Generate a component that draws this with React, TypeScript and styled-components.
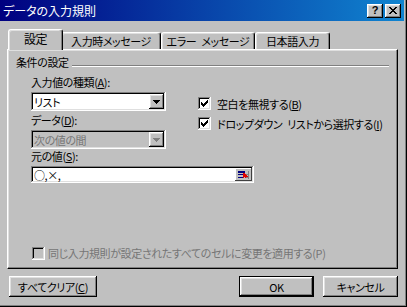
import React from "react";
import styled, { createGlobalStyle, css } from "styled-components";

const GlobalStyle = createGlobalStyle`
  html, body { margin: 0; padding: 0; background: #c0c0c0; }
  * { box-sizing: border-box; }
`;

const raised = css`
  box-shadow: inset -1px -1px #000, inset 1px 1px #fff, inset -2px -2px #808080, inset 2px 2px #dfdfdf;
`;
const sunken = css`
  box-shadow: inset -1px -1px #fff, inset 1px 1px #808080, inset -2px -2px #dfdfdf, inset 2px 2px #000;
`;

const Window = styled.div`
  width: 407px;
  height: 307px;
  background: #c0c0c0;
  display: flex;
  flex-direction: column;
  padding: 0 3px 3px 0;
  box-shadow: inset -1px -1px #000, inset -2px -2px #808080;
  font-family: "Noto Sans CJK JP", "Liberation Sans", sans-serif;
  font-size: 11px;
  letter-spacing: -0.4px;
  word-spacing: 3px;
  line-height: 14px;
  font-feature-settings: "palt";
  color: #000;
  overflow: hidden;
`;

const TitleBar = styled.div`
  height: 21px;
  flex: none;
  display: flex;
  align-items: center;
  padding: 0 3px 0 3px;
  background: linear-gradient(90deg, #000080, #1084d0);
`;

const TitleText = styled.span`
  flex: 1;
  color: #fff;
  font-size: 12px;
  letter-spacing: 0;
`;

const TitleButton = styled.div<{ $gap?: number }>`
  width: 16px;
  height: 14px;
  margin-left: ${(p) => p.$gap ?? 0}px;
  background: #c0c0c0;
  ${raised};
  display: flex;
  align-items: center;
  justify-content: center;
  font-family: "Liberation Sans", sans-serif;
  font-weight: bold;
  font-size: 11px;
  line-height: 11px;
  letter-spacing: 0;
`;

const Body = styled.div`
  flex: 1;
  display: flex;
  flex-direction: column;
  padding: 8px 6px 0 7px;
`;

const TabRow = styled.div`
  height: 20px;
  display: flex;
  align-items: flex-end;
  padding-left: 3px;
`;

const Tab = styled.div<{ $w: number; $active?: boolean }>`
  position: relative;
  flex: none;
  z-index: ${(p) => (p.$active ? 2 : 1)};
  width: ${(p) => p.$w + (p.$active ? 4 : 0)}px;
  height: ${(p) => (p.$active ? 21 : 17)}px;
  margin: 0 ${(p) => (p.$active ? -2 : 0)}px ${(p) => (p.$active ? -1 : 0)}px;
  background: #c0c0c0;
  border-top: 1px solid #fff;
  border-left: 1px solid #fff;
  border-right: 1px solid #000;
  border-radius: 3px 3px 0 0;
  box-shadow: inset -1px 0 #808080, inset 1px 1px #dfdfdf;
  display: flex;
  align-items: center;
  justify-content: center;
  font-size: ${(p) => (p.$active ? 12 : 11)}px;
  padding-bottom: ${(p) => (p.$active ? 2 : 0)}px;
  white-space: nowrap;
`;

const Panel = styled.div`
  height: 220px;
  flex: none;
  border: 1px solid;
  border-color: #fff #000 #000 #fff;
  box-shadow: inset -1px -1px #808080, inset 1px 1px #dfdfdf;
  display: flex;
  flex-direction: column;
  padding: 5px 8px 8px 8px;
`;

const GroupHeader = styled.div`
  height: 14px;
  display: flex;
  align-items: flex-start;
  gap: 3px;
`;

const GroupLine = styled.div`
  flex: 1;
  margin-top: 10px;
  height: 2px;
  border-top: 1px solid #808080;
  border-bottom: 1px solid #fff;
`;

const Content = styled.div`
  margin-left: 15px;
  display: flex;
  flex-direction: column;
`;

const Upper = styled.div`
  display: flex;
  margin-top: 6px;
`;

const LeftCol = styled.div`
  width: 167px;
  flex: none;
  display: flex;
  flex-direction: column;
`;

const RightCol = styled.div`
  display: flex;
  flex-direction: column;
  gap: 7px;
  padding-top: 22px;
`;

const Label = styled.div<{ $mt?: number }>`
  height: 14px;
  margin-top: ${(p) => p.$mt ?? 0}px;
  white-space: nowrap;
`;

const Field = styled.div<{ $w: number; $h: number; $mt?: number; $disabled?: boolean }>`
  width: ${(p) => p.$w}px;
  height: ${(p) => p.$h}px;
  margin-top: ${(p) => p.$mt ?? 0}px;
  background: ${(p) => (p.$disabled ? "#c0c0c0" : "#fff")};
  ${sunken};
  display: flex;
  align-items: center;
  padding: 2px 2px 2px 3px;
  color: ${(p) => (p.$disabled ? "#767676" : "#000")};
`;

const FieldText = styled.span`
  flex: 1;
  white-space: nowrap;
`;

const DropButton = styled.div`
  width: 15px;
  height: 15px;
  background: #c0c0c0;
  ${raised};
  display: flex;
  align-items: center;
  justify-content: center;
`;

const CheckRow = styled.div<{ $disabled?: boolean }>`
  height: 13px;
  display: flex;
  align-items: center;
  gap: 6px;
  white-space: nowrap;
  color: ${(p) => (p.$disabled ? "#767676" : "#000")};
`;

const BoxWrap = styled.div<{ $disabled?: boolean }>`
  width: 13px;
  height: 13px;
  flex: none;
  background: ${(p) => (p.$disabled ? "#c0c0c0" : "#fff")};
  ${sunken};
  display: flex;
  align-items: center;
  justify-content: center;
`;

const BottomCheck = styled(CheckRow)`
  margin-top: auto;
  margin-left: 16px;
  height: 14px;
  gap: 3px;
`;

const Footer = styled.div`
  margin-top: 7px;
  display: flex;
  align-items: center;
`;

const Button = styled.div<{ $w: number; $default?: boolean; $ml?: number }>`
  width: ${(p) => p.$w}px;
  height: 21px;
  margin-left: ${(p) => p.$ml ?? 0}px;
  background: #c0c0c0;
  border: ${(p) => (p.$default ? "1px solid #000" : "none")};
  ${raised};
  display: flex;
  align-items: center;
  justify-content: center;
  white-space: nowrap;
`;

const Spacer = styled.div`
  flex: 1;
`;

const Check = () => (
  <svg width="7" height="7" viewBox="0 0 7 7" shapeRendering="crispEdges">
    {[2, 3, 4, 3, 2, 1, 0].map((y, x) => (
      <rect key={x} x={x} y={y} width="1" height="3" fill="#000" />
    ))}
  </svg>
);

const CheckBox = ({ checked, disabled }: { checked?: boolean; disabled?: boolean }) => (
  <BoxWrap $disabled={disabled}>{checked && <Check />}</BoxWrap>
);

const Arrow = ({ color }: { color: string }) => (
  <svg width="7" height="4" viewBox="0 0 7 4" shapeRendering="crispEdges">
    <path d="M0 0H7V1H6V2H5V3H4V4H3V3H2V2H1V1H0Z" fill={color} />
  </svg>
);

const RefIcon = () => (
  <svg width="17" height="13" viewBox="0 0 17 13" shapeRendering="crispEdges">
    <rect x="0" y="0" width="17" height="13" fill="#c0c0c0" />
    <rect x="0" y="0" width="16" height="1" fill="#fff" />
    <rect x="0" y="0" width="1" height="12" fill="#fff" />
    <rect x="0" y="12" width="17" height="1" fill="#404040" />
    <rect x="16" y="0" width="1" height="13" fill="#404040" />
    <rect x="3" y="3" width="7" height="2" fill="#000080" />
    <rect x="3" y="6" width="6" height="1" fill="#000080" />
    <rect x="3" y="9" width="6" height="1" fill="#000080" />
    <rect x="10" y="6" width="4" height="1" fill="#808080" />
    <rect x="10" y="9" width="4" height="1" fill="#808080" />
    <rect x="13" y="3" width="1" height="8" fill="#808080" />
    <path d="M8 5H10V6H11V7H12V8H13V9H11V10H10V9H9V10H8Z" fill="#e00000" />
  </svg>
);

const CloseIcon = () => (
  <svg width="8" height="7" viewBox="0 0 8 7" shapeRendering="crispEdges">
    <path d="M0 0H2V1H3V2H5V1H6V0H8V1H7V2H6V3H5V4H6V5H7V6H8V7H6V6H5V5H3V6H2V7H0V6H1V5H2V4H3V3H2V2H1V1H0Z" fill="#000" />
  </svg>
);

export default function App() {
  return (
    <>
      <GlobalStyle />
      <Window>
        <TitleBar>
          <TitleText>データの入力規則</TitleText>
          <TitleButton>?</TitleButton>
          <TitleButton $gap={2}>
            <CloseIcon />
          </TitleButton>
        </TitleBar>
        <Body>
          <TabRow>
            <Tab $w={51} $active>設定</Tab>
            <Tab $w={100}>入力時メッセージ</Tab>
            <Tab $w={94}>エラー メッセージ</Tab>
            <Tab $w={75}>日本語入力</Tab>
          </TabRow>
          <Panel>
            <GroupHeader>
              <span>条件の設定</span>
              <GroupLine />
            </GroupHeader>
            <Content>
              <Upper>
                <LeftCol>
                  <Label>
                    入力値の種類(<u>A</u>):
                  </Label>
                  <Field $w={135} $h={19} $mt={3}>
                    <FieldText>リスト</FieldText>
                    <DropButton>
                      <Arrow color="#000" />
                    </DropButton>
                  </Field>
                  <Label $mt={2}>
                    データ(<u>D</u>):
                  </Label>
                  <Field $w={135} $h={19} $mt={3} $disabled>
                    <FieldText>次の値の間</FieldText>
                    <DropButton>
                      <Arrow color="#808080" />
                    </DropButton>
                  </Field>
                </LeftCol>
                <RightCol>
                  <CheckRow>
                    <CheckBox checked />
                    <span>
                      空白を無視する(<u>B</u>)
                    </span>
                  </CheckRow>
                  <CheckRow>
                    <CheckBox checked />
                    <span>
                      ドロップダウン リストから選択する(<u>I</u>)
                    </span>
                  </CheckRow>
                </RightCol>
              </Upper>
              <Label>
                元の値(<u>S</u>):
              </Label>
              <Field $w={223} $h={17} $mt={3}>
                <FieldText>○,×,</FieldText>
                <RefIcon />
              </Field>
            </Content>
            <BottomCheck $disabled>
              <CheckBox disabled />
              <span>同じ入力規則が設定されたすべてのセルに変更を適用する(P)</span>
            </BottomCheck>
          </Panel>
          <Footer>
            <Button $w={88} $ml={2}>
              すべてクリア(<u>C</u>)
            </Button>
            <Spacer />
            <Button $w={75} $default>
              OK
            </Button>
            <Button $w={75} $ml={9}>
              キャンセル
            </Button>
          </Footer>
        </Body>
      </Window>
    </>
  );
}
